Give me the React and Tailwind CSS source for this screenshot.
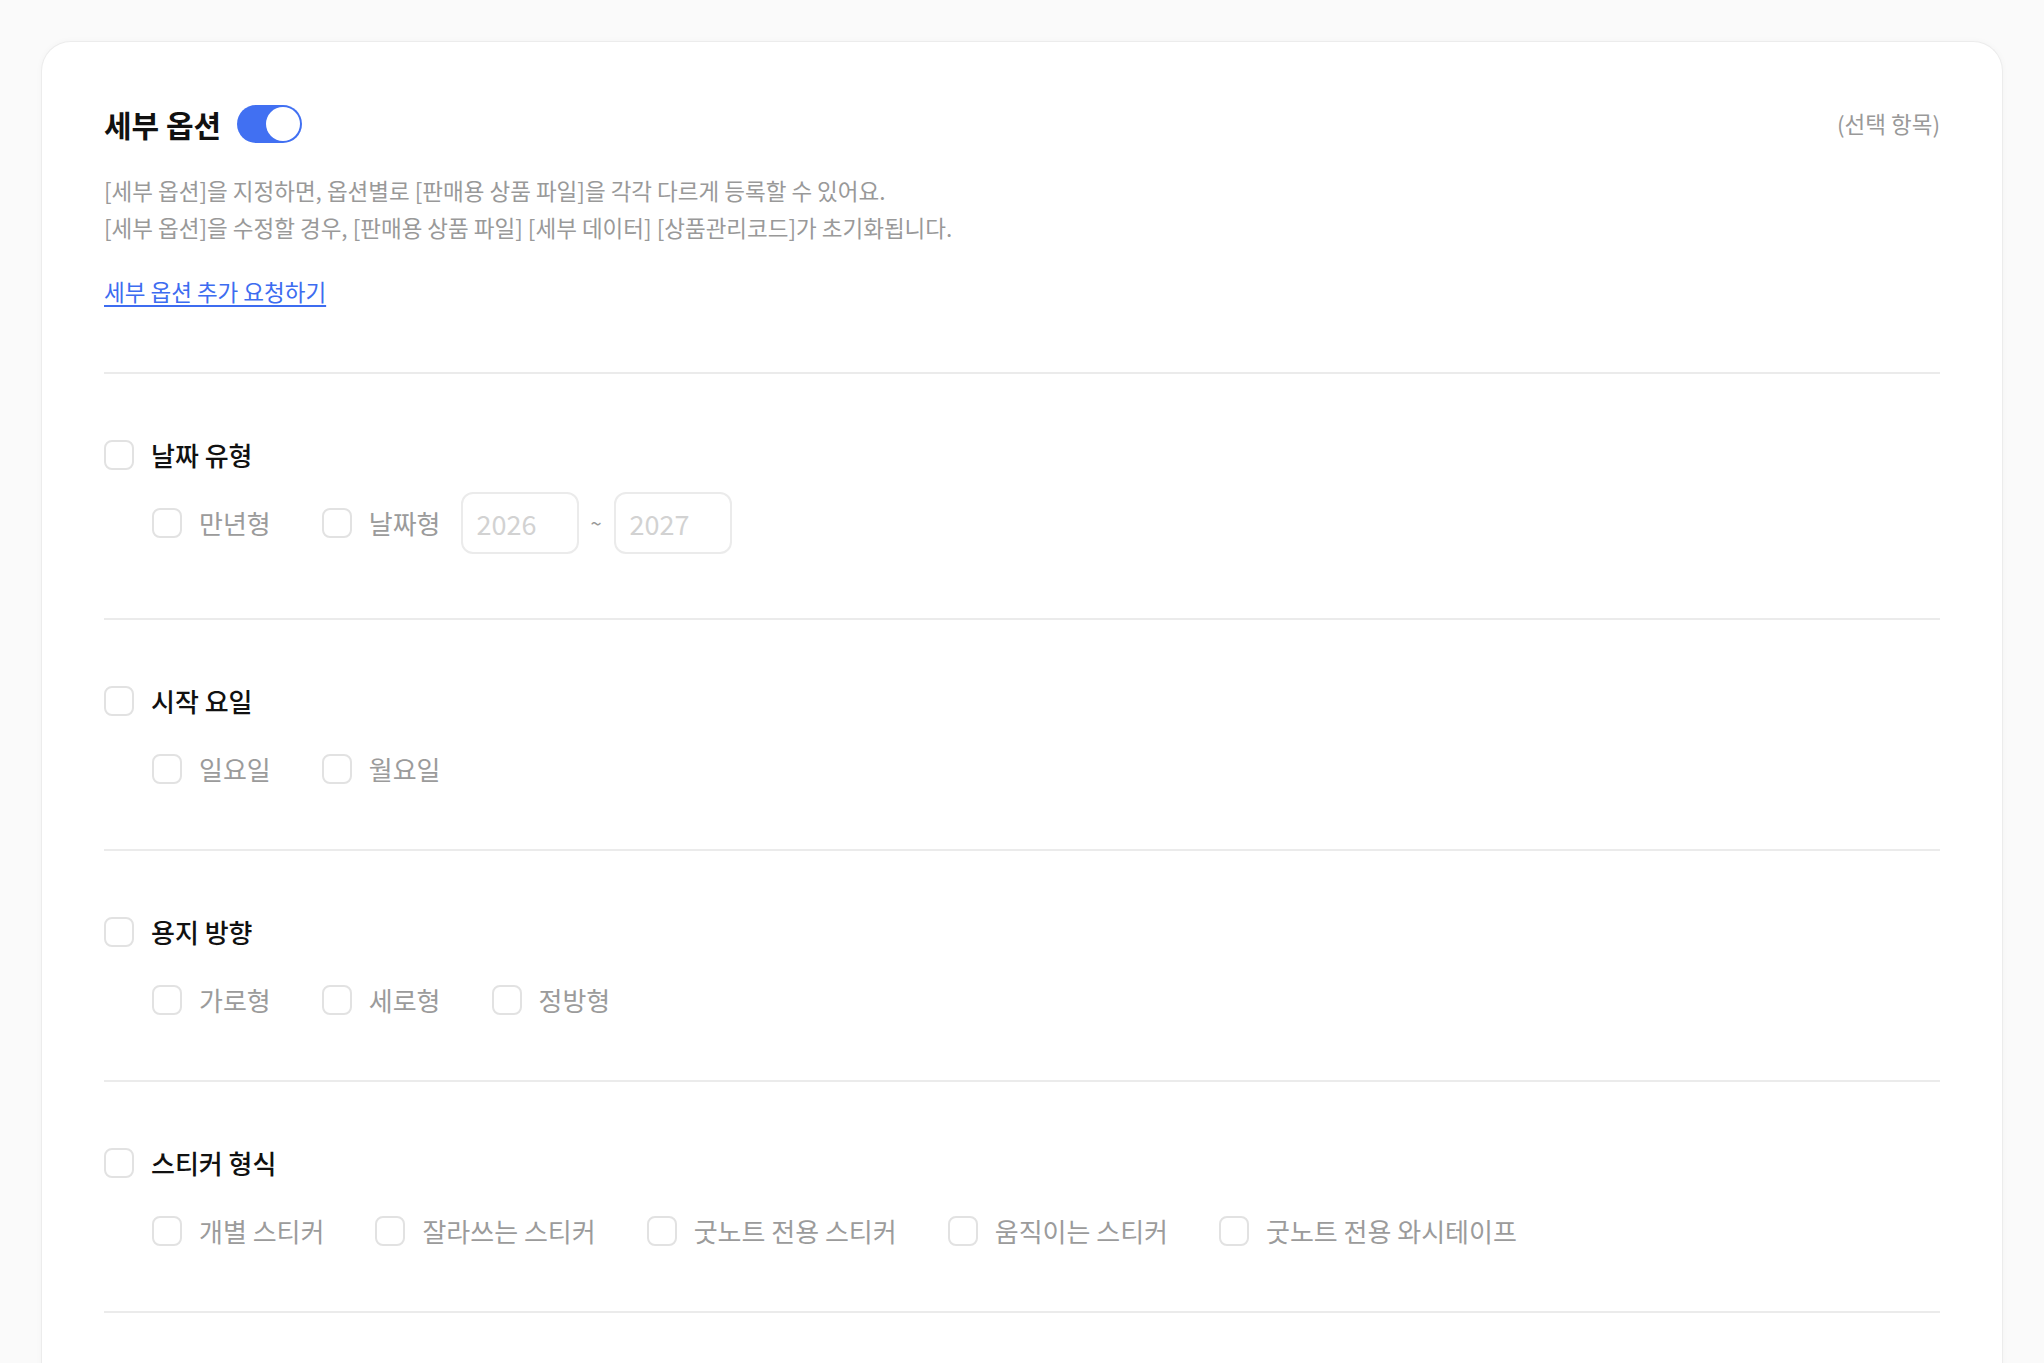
import React, { useState } from 'react';

const FONT = "font-['Noto_Sans_CJK_KR','Noto_Sans',sans-serif]";

// Square checkbox with soft rounded corners
const Box = ({ checked, onClick }) => (
  <button
    type="button"
    onClick={onClick}
    className={`h-[30px] w-[30px] shrink-0 rounded-[8px] border-2 ${
      checked ? 'border-[#4170f2] bg-[#4170f2]' : 'border-[#e2e2e2] bg-white'
    }`}
  />
);

const Option = ({ label }) => {
  const [checked, setChecked] = useState(false);
  return (
    <label className="flex items-center gap-[17px]">
      <Box checked={checked} onClick={() => setChecked(!checked)} />
      <span className="text-[26px] leading-[32px] text-[#9b9b9b]">{label}</span>
    </label>
  );
};

const Section = ({ title, options, children, tall }) => {
  const [checked, setChecked] = useState(false);
  return (
    <div className="border-b-2 border-[#ebebeb] pt-[65px] pb-[64px]">
      <div className="flex h-8 items-center gap-[17px]">
        <Box checked={checked} onClick={() => setChecked(!checked)} />
        <span className="text-[26px] font-medium leading-[32px] text-[#111]">{title}</span>
      </div>
      <div className={`flex items-center pl-[48px] ${tall ? 'mt-[21px] h-[62px]' : 'mt-[36px] h-8'}`}>
        <div className="flex items-center gap-[51px]">
          {options.map((o) => (
            <Option key={o} label={o} />
          ))}
        </div>
        {children}
      </div>
    </div>
  );
};

export default function App() {
  const [enabled, setEnabled] = useState(true);

  return (
    <div className={`min-h-screen bg-[#fafafa] px-[41px] pt-[41px] ${FONT}`}>
      <div className="rounded-t-[30px] border border-b-0 border-[#ececec] bg-white px-[62px] pt-[62px] pb-[120px] shadow-[0_0_6px_rgba(0,0,0,0.03)]">
        <div className="flex h-[40px] items-center justify-between">
          <div className="flex items-center gap-[16px]">
            <h2 className="text-[30px] font-bold leading-[40px] text-[#111]">세부 옵션</h2>
            <button
              type="button"
              onClick={() => setEnabled(!enabled)}
              className={`flex h-[38px] w-[65px] items-center rounded-full p-[2px] ${
                enabled ? 'justify-end bg-[#4170f2]' : 'justify-start bg-[#d9d9d9]'
              }`}
            >
              <span className="h-[34px] w-[34px] rounded-full bg-white" />
            </button>
          </div>
          <span className="text-[22.5px] text-[#999]">(선택 항목)</span>
        </div>

        <div className="mt-[28px] text-[22.5px] leading-[37px] text-[#999]">
          <p>[세부 옵션]을 지정하면, 옵션별로 [판매용 상품 파일]을 각각 다르게 등록할 수 있어요.</p>
          <p>[세부 옵션]을 수정할 경우, [판매용 상품 파일] [세부 데이터] [상품관리코드]가 초기화됩니다.</p>
        </div>

        <a href="#" className="mt-[27px] inline-block text-[22.5px] leading-[37px] text-[#3d6cf0] underline underline-offset-4">
          세부 옵션 추가 요청하기
        </a>

        <div className="mt-[62px] h-[2px] bg-[#ebebeb]" />

        <Section title="날짜 유형" options={['만년형', '날짜형']} tall>
          <div className="ml-[20px] flex items-center">
            <input
              placeholder="2026"
              className="h-[62px] w-[118px] rounded-[12px] border-2 border-[#ebebeb] px-[14px] text-[27px] text-[#333] outline-none placeholder:text-[#d2d2d2]"
            />
            <span className="w-[35px] text-center text-[20px] text-[#999]">~</span>
            <input
              placeholder="2027"
              className="h-[62px] w-[118px] rounded-[12px] border-2 border-[#ebebeb] px-[14px] text-[27px] text-[#333] outline-none placeholder:text-[#d2d2d2]"
            />
          </div>
        </Section>
        <Section title="시작 요일" options={['일요일', '월요일']} />
        <Section title="용지 방향" options={['가로형', '세로형', '정방형']} />
        <Section
          title="스티커 형식"
          options={['개별 스티커', '잘라쓰는 스티커', '굿노트 전용 스티커', '움직이는 스티커', '굿노트 전용 와시테이프']}
        />
      </div>
    </div>
  );
}
